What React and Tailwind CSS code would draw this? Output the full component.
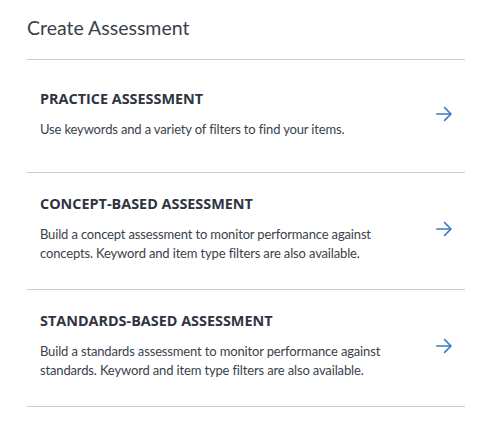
import React from "react";

const items = [
  {
    title: "PRACTICE ASSESSMENT",
    desc: "Use keywords and a variety of filters to find your items.",
  },
  {
    title: "CONCEPT-BASED ASSESSMENT",
    desc: "Build a concept assessment to monitor performance against concepts. Keyword and item type filters are also available.",
  },
  {
    title: "STANDARDS-BASED ASSESSMENT",
    desc: "Build a standards assessment to monitor performance against standards. Keyword and item type filters are also available.",
  },
];

function Arrow() {
  return (
    <svg width="16" height="16" viewBox="0 0 16 16" fill="none" className="shrink-0">
      <path d="M0.8 8H15M8.6 1.6L15 8L8.6 14.4" stroke="#3b7bc4" strokeWidth="1.6" strokeLinecap="round" strokeLinejoin="round" />
    </svg>
  );
}

export default function App() {
  return (
    <div className="bg-white w-[479px] h-[428px] pl-[27px] pr-[14px]" style={{ fontFamily: "Lato, 'Open Sans', sans-serif" }}>
      <h1 className="pt-[16px] pb-[19px] text-[19.5px] leading-[24px] text-[#3a3f4b] font-normal">Create Assessment</h1>
      <div className="border-t border-[#c9ccd3]">
        {items.map((it) => (
          <div key={it.title} className="flex items-center border-b border-[#c9ccd3] min-h-[113px] pt-[22px] pb-[26px] pl-[13px] pr-[13px]">
            <div className="flex-1 pr-[40px]">
              <div className="text-[14.4px] leading-[18px] font-bold text-[#2f3441]" style={{ fontFamily: "'Open Sans', Lato, sans-serif" }}>{it.title}</div>
              <div className="mt-[12px] text-[13px] leading-[19px] tracking-[-0.15px] text-[#3a3f4b]">{it.desc}</div>
            </div>
            <Arrow />
          </div>
        ))}
      </div>
    </div>
  );
}
